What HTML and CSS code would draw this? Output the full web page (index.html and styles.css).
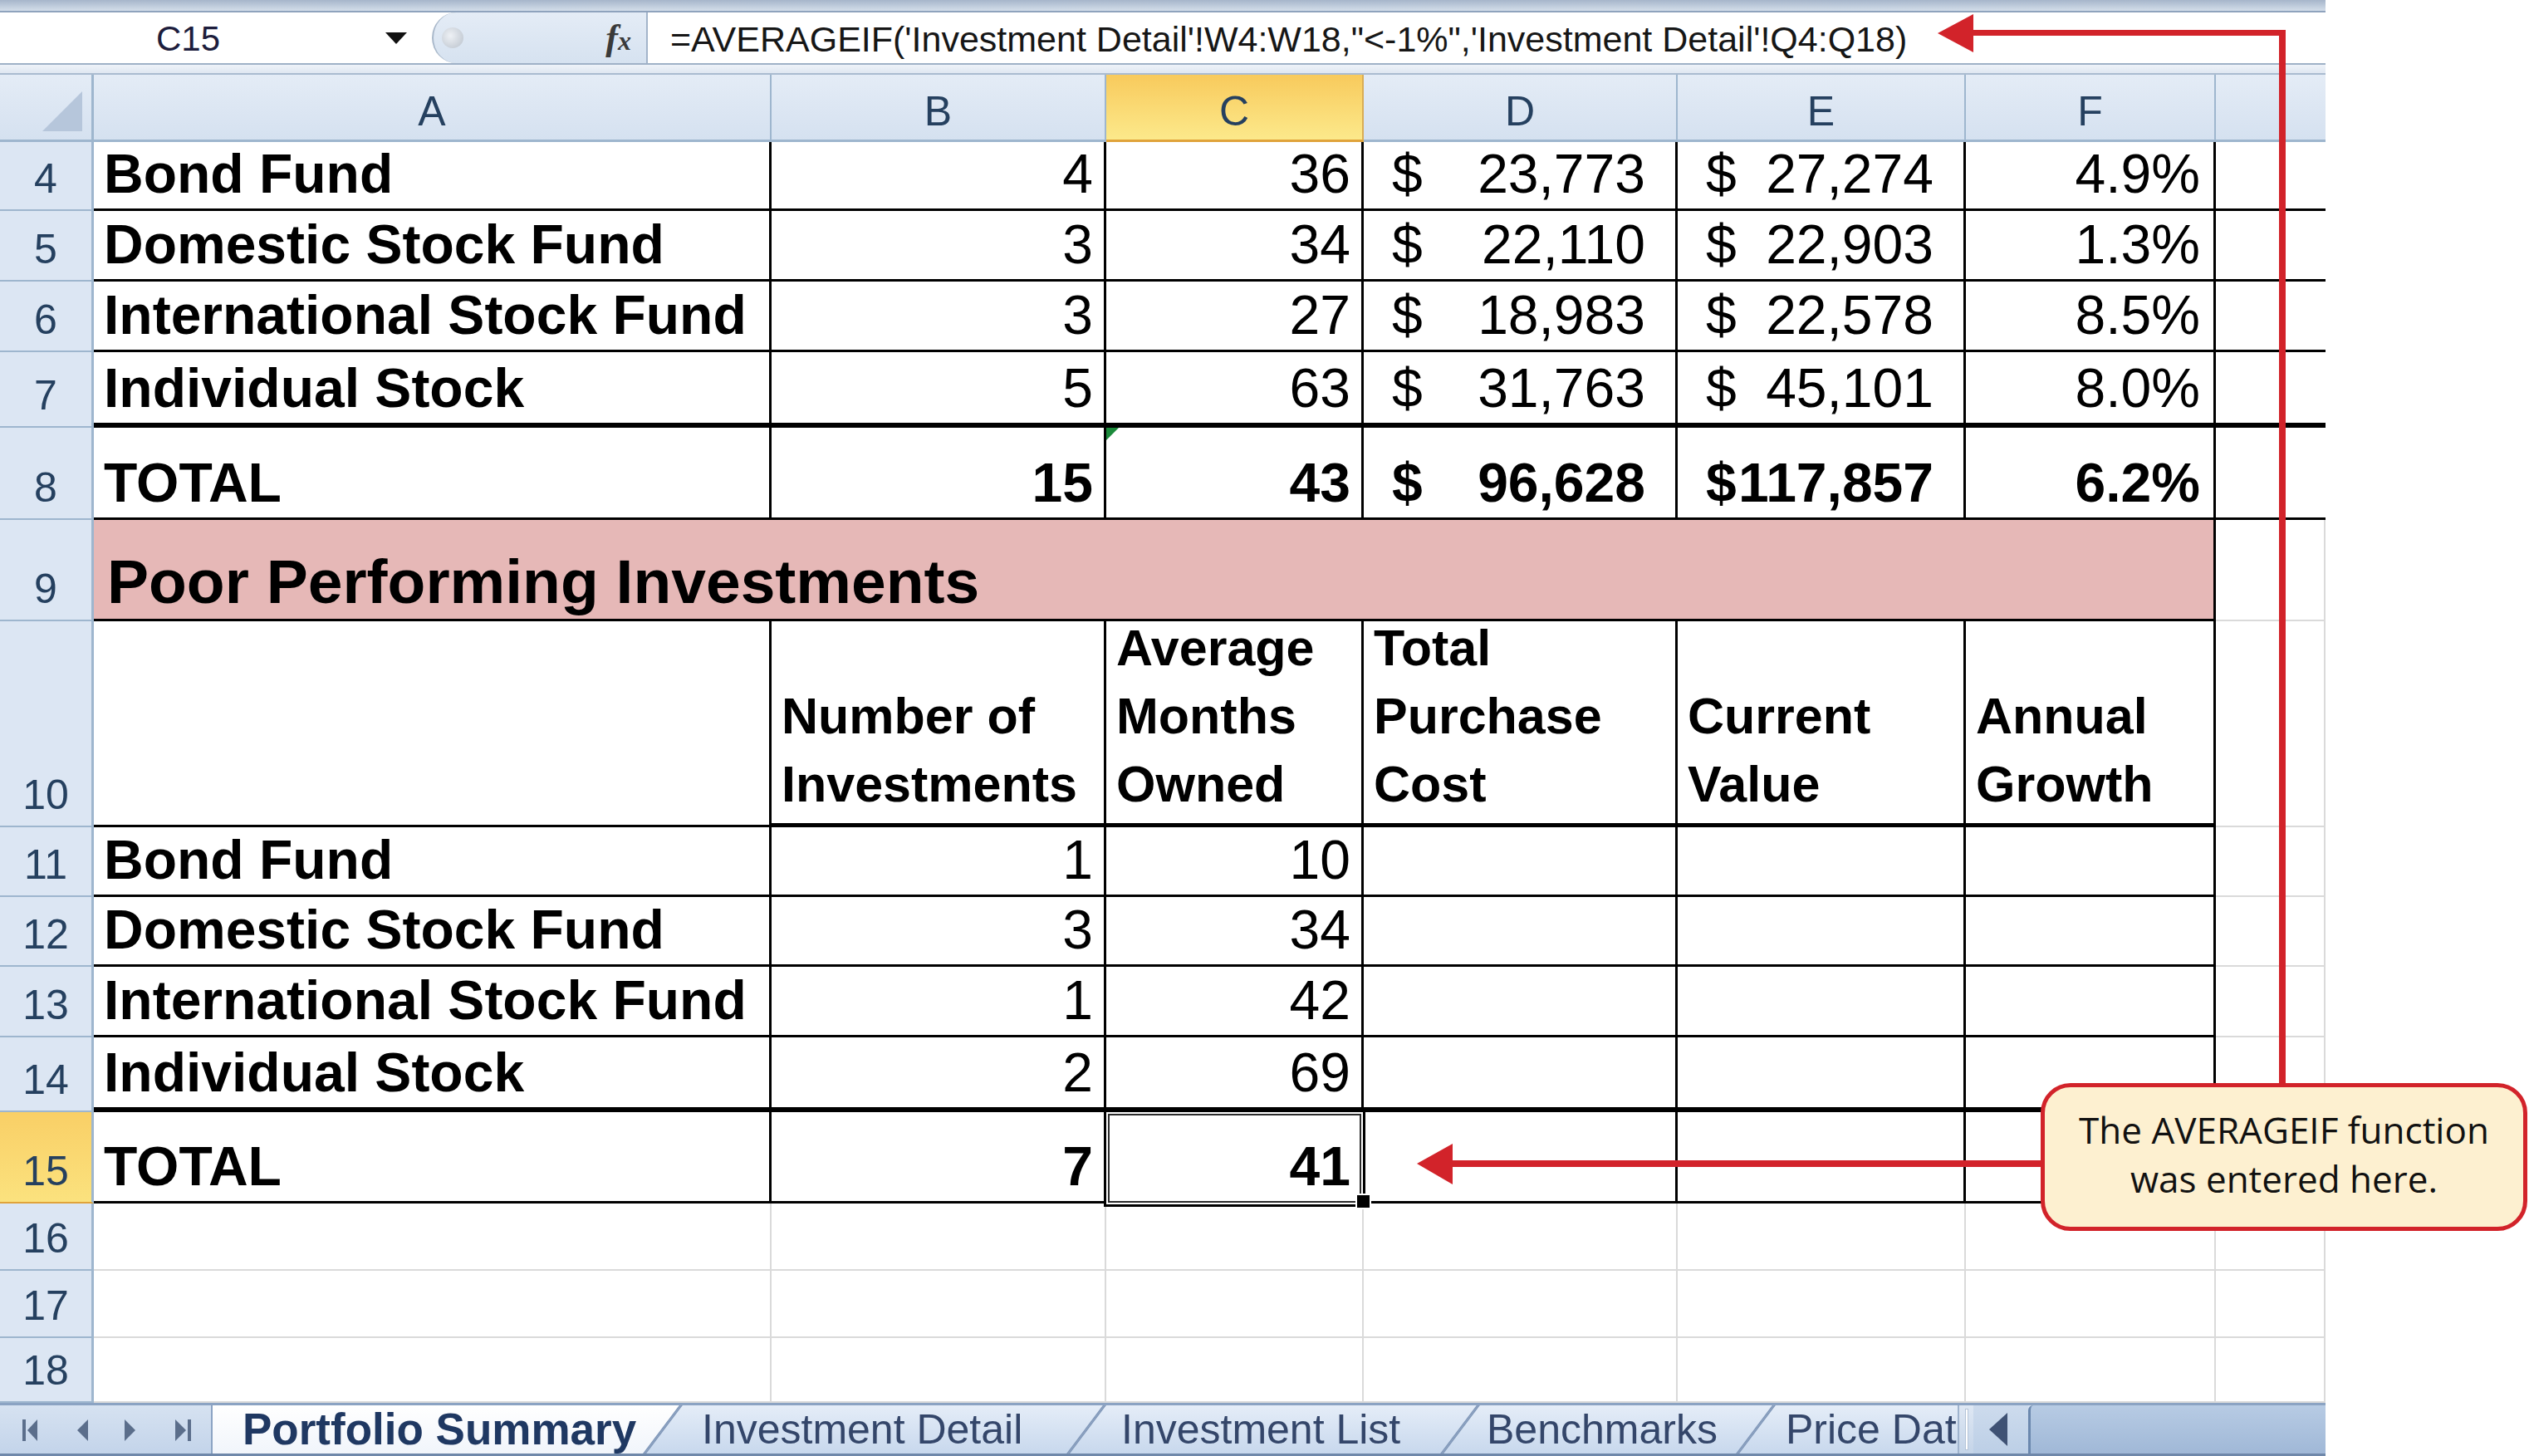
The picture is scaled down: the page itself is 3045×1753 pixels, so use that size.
FILE: index.html
```html
<!DOCTYPE html>
<html>
<head>
<meta charset="utf-8">
<link rel="stylesheet" href="styles.css">
</head>
<body>
<div class="app">
  <div class="topstrip"></div>
  <div class="fbar">
    <div class="namebox"><span class="name">C15</span><svg class="dd" width="26" height="14" viewBox="0 0 26 14"><polygon points="0,0 26,0 13,14" fill="#111"/></svg></div>
    <div class="fxpanel"><span class="grip"></span><span class="fx">f<span class="fxx">x</span></span></div>
    <div class="finput">=AVERAGEIF('Investment Detail'!W4:W18,"&lt;-1%",'Investment Detail'!Q4:Q18)</div>
  </div>
  <div class="fgap"></div>
  <div class="sheet">
    <!-- header -->
    <div class="ch corner"><svg width="48" height="48" viewBox="0 0 48 48"><polygon points="48,0 48,48 0,48" fill="#b6c6db"/></svg></div>
    <div class="ch">A</div><div class="ch">B</div><div class="ch on">C</div><div class="ch">D</div><div class="ch">E</div><div class="ch">F</div><div class="ch last"></div>
    <!-- row 4 -->
    <div class="rh">4</div>
    <div class="c b">Bond Fund</div><div class="c n">4</div><div class="c n">36</div>
    <div class="c acct"><span>$</span><span>23,773</span></div><div class="c acct"><span>$</span><span>27,274</span></div>
    <div class="c pct">4.9%</div><div class="c gx"></div>
    <!-- row 5 -->
    <div class="rh">5</div>
    <div class="c b">Domestic Stock Fund</div><div class="c n">3</div><div class="c n">34</div>
    <div class="c acct"><span>$</span><span>22,110</span></div><div class="c acct"><span>$</span><span>22,903</span></div>
    <div class="c pct">1.3%</div><div class="c gx"></div>
    <!-- row 6 -->
    <div class="rh">6</div>
    <div class="c b">International Stock Fund</div><div class="c n">3</div><div class="c n">27</div>
    <div class="c acct"><span>$</span><span>18,983</span></div><div class="c acct"><span>$</span><span>22,578</span></div>
    <div class="c pct">8.5%</div><div class="c gx"></div>
    <!-- row 7 -->
    <div class="rh">7</div>
    <div class="c b tk">Individual Stock</div><div class="c n tk">5</div><div class="c n tk">63</div>
    <div class="c acct tk"><span>$</span><span>31,763</span></div><div class="c acct tk"><span>$</span><span>45,101</span></div>
    <div class="c pct tk">8.0%</div><div class="c gx tk"></div>
    <!-- row 8 -->
    <div class="rh">8</div>
    <div class="c b">TOTAL</div><div class="c n b">15</div><div class="c n b err">43</div>
    <div class="c acct b"><span>$</span><span>96,628</span></div><div class="c acct b"><span>$</span><span>117,857</span></div>
    <div class="c pct b">6.2%</div><div class="c gx"></div>
    <!-- row 9 -->
    <div class="rh">9</div>
    <div class="c title">Poor Performing Investments</div>
    <div class="g"></div>
    <!-- row 10 -->
    <div class="rh">10</div>
    <div class="c"></div>
    <div class="c hd">Number of Investments</div>
    <div class="c hd">Average Months Owned</div>
    <div class="c hd">Total Purchase Cost</div>
    <div class="c hd">Current Value</div>
    <div class="c hd">Annual Growth</div>
    <div class="g"></div>
    <!-- row 11 -->
    <div class="rh">11</div>
    <div class="c b">Bond Fund</div><div class="c n">1</div><div class="c n">10</div>
    <div class="c"></div><div class="c"></div><div class="c"></div><div class="g"></div>
    <!-- row 12 -->
    <div class="rh">12</div>
    <div class="c b">Domestic Stock Fund</div><div class="c n">3</div><div class="c n">34</div>
    <div class="c"></div><div class="c"></div><div class="c"></div><div class="g"></div>
    <!-- row 13 -->
    <div class="rh">13</div>
    <div class="c b">International Stock Fund</div><div class="c n">1</div><div class="c n">42</div>
    <div class="c"></div><div class="c"></div><div class="c"></div><div class="g"></div>
    <!-- row 14 -->
    <div class="rh">14</div>
    <div class="c b tk">Individual Stock</div><div class="c n tk">2</div><div class="c n tk">69</div>
    <div class="c tk"></div><div class="c tk"></div><div class="c tk"></div><div class="g"></div>
    <!-- row 15 -->
    <div class="rh on">15</div>
    <div class="c b">TOTAL</div><div class="c n b">7</div><div class="c n b sel">41</div>
    <div class="c"></div><div class="c"></div><div class="c"></div><div class="g"></div>
    <!-- row 16 -->
    <div class="rh">16</div>
    <div class="g"></div><div class="g"></div><div class="g"></div><div class="g"></div><div class="g"></div><div class="g"></div><div class="g"></div>
    <!-- row 17 -->
    <div class="rh">17</div>
    <div class="g"></div><div class="g"></div><div class="g"></div><div class="g"></div><div class="g"></div><div class="g"></div><div class="g"></div>
    <!-- row 18 -->
    <div class="rh">18</div>
    <div class="g"></div><div class="g"></div><div class="g"></div><div class="g"></div><div class="g"></div><div class="g"></div><div class="g"></div>
  </div>
  <div class="tabbar">
    <div class="nav">
      <svg width="254" height="58" viewBox="0 0 254 58">
        <g fill="#5b6e8b">
          <rect x="27" y="17" width="4" height="26"/>
          <polygon points="45,17 33,30 45,43"/>
          <polygon points="106,17 93,30 106,43"/>
          <polygon points="150,17 163,30 150,43"/>
          <polygon points="211,17 224,30 211,43"/>
          <rect x="226" y="17" width="4" height="26"/>
        </g>
      </svg>
    </div>
    <div class="tabs">
      <div class="tab active">Portfolio Summary</div>
      <div class="tab t2">Investment Detail</div>
      <div class="tab t3">Investment List</div>
      <div class="tab t4">Benchmarks</div>
      <div class="tab t5">Price Data</div>
    </div>
    <div class="split"><i></i></div>
    <div class="scrbtn"><svg width="22" height="40" viewBox="0 0 22 40"><polygon points="22,0 22,40 0,20" fill="#3f5274"/></svg></div>
    <div class="track"></div>
  </div>
</div>
<svg class="annot" width="3045" height="1753" viewBox="0 0 3045 1753">
  <g fill="#d2232a" stroke="none">
    <rect x="2744" y="36" width="8" height="1272"/>
    <rect x="2372" y="36" width="380" height="7"/>
    <polygon points="2333,40 2376,17 2376,63"/>
    <rect x="1745" y="1397" width="720" height="8"/>
    <polygon points="1706,1401 1749,1377 1749,1426"/>
  </g>
</svg>
<div class="callout">The AVERAGEIF function<br>was entered here.</div>
</body>
</html>
```
FILE: styles.css
```css
* { box-sizing: border-box; margin: 0; padding: 0; }
html, body { background: #fff; }
body {
  margin: 0;
  width: 3045px;
  height: 1753px;
  overflow: hidden;
  position: relative;
  font-family: "Liberation Sans", Arial, sans-serif;
}
.app { width: 2800px; }

.topstrip { height: 13px; background: linear-gradient(#a6b5ca, #d3deea); }

.fbar {
  height: 65px;
  display: flex;
  background: #fff;
  border-top: 2px solid #8fa3bd;
  border-bottom: 2px solid #9fb1c7;
}
.namebox {
  width: 520px;
  display: flex;
  align-items: center;
  padding-left: 188px;
  font-size: 42px;
  color: #1d1d3c;
  padding-top: 2px;
}
.namebox .name { width: 276px; }
.namebox .dd { margin-top: -2px; }
.fxpanel {
  width: 258px;
  display: flex;
  align-items: center;
  background: linear-gradient(#e4ecf6, #d6e2f0);
  border-left: 2px solid #a9b8ca;
  border-radius: 30px 0 0 30px / 31px 0 0 31px;
  padding-left: 10px;
  padding-right: 18px;
}
.grip {
  width: 26px;
  height: 25px;
  border-radius: 50%;
  background: radial-gradient(circle at 40% 40%, #eef1f5, #b9c1cb);
  margin-right: auto;
}
.fx {
  font-family: "Liberation Serif", "Times New Roman", serif;
  font-style: italic;
  font-weight: bold;
  font-size: 44px;
  color: #3a3a3a;
  line-height: 1;
}
.fxx { font-size: 32px; }
.finput {
  flex: 1;
  border-left: 2px solid #a3b4ca;
  padding-left: 27px;
  padding-top: 2px;
  font-size: 43px;
  line-height: 61px;
  color: #161616;
  white-space: nowrap;
}
.fgap {
  height: 12px;
  background: linear-gradient(#eef3f9, #dfe7f1);
  border-bottom: 2px solid #aabbd0;
}

.sheet {
  display: grid;
  grid-template-columns: 113px 816px 403px 310px 378px 347px 301px 132px;
  grid-template-rows: 81px 83px 85px 85px 91px 111px 122px 248px 84px 84px 85px 90px 110px 81px 81px 78px;
}
.ch {
  background: linear-gradient(#e4ecf6, #d5e1f0);
  border-right: 2px solid #9eb6ce;
  border-bottom: 3px solid #9eb6ce;
  display: flex;
  justify-content: center;
  align-items: flex-end;
  padding-bottom: 5px;
  font-size: 50px;
  line-height: 1.15;
  color: #25405f;
}
.ch.corner { justify-content: flex-start; align-items: flex-start; padding: 20px 0 0 51px; border-right-width: 3px; }
.ch.on {
  background: linear-gradient(#f8ca5c, #fce98b);
  border-bottom-color: #e0a33a;
  border-right-color: #d9ad55;
}
.ch.last { border-right: none; }
.rh {
  background: #dce6f3;
  border-right: 3px solid #9eb6ce;
  border-bottom: 2px solid #9eb6ce;
  display: flex;
  justify-content: center;
  align-items: flex-end;
  padding-bottom: 8px;
  font-size: 50px;
  line-height: 1.15;
  color: #25405f;
}
.rh.on { background: linear-gradient(#f9cf66, #fbe27e); border-bottom-color: #e0a33a; }

.c {
  border-right: 3px solid #000;
  border-bottom: 3px solid #000;
  display: flex;
  align-items: flex-end;
  padding: 0 13px 3px 12px;
  font-size: 66px;
  line-height: 1.15;
  color: #000;
  white-space: nowrap;
  background: #fff;
}
.n { justify-content: flex-end; }
.b { font-weight: bold; }
.acct { justify-content: space-between; padding-left: 34px; padding-right: 36px; }
.pct { justify-content: flex-end; padding-right: 16px; }
.tk { border-bottom-width: 6px; }
.gx { border-right: none; }
.g { border-right: 2px solid #dadada; border-bottom: 2px solid #dadada; }
.title {
  grid-column: span 6;
  background: #e6b8b7;
  font-size: 75px;
  font-weight: bold;
  padding-left: 16px;
  padding-bottom: 2px;
}
.hd {
  white-space: normal;
  font-weight: bold;
  font-size: 61px;
  line-height: 82px;
  padding-bottom: 6px;
  border-bottom-width: 5px;
}
.err { position: relative; }
.err::before {
  content: "";
  position: absolute;
  left: 0;
  top: 0;
  border-top: 15px solid #1b8a3b;
  border-right: 15px solid transparent;
}
.sel { position: relative; z-index: 2; }
.sel::after {
  content: "";
  position: absolute;
  left: -3px;
  top: -3px;
  right: -5px;
  bottom: -7px;
  border: 3px solid #000;
  box-shadow: inset 0 0 0 2px #fff, inset 0 0 0 4px #2b2b2b;
}
.sel::before {
  content: "";
  position: absolute;
  right: -12px;
  bottom: -10px;
  width: 15px;
  height: 15px;
  background: #000;
  border: 2px solid #fff;
  z-index: 3;
}

.tabbar {
  height: 64px;
  display: flex;
  border-top: 3px solid #8ba3c3;
  border-bottom: 3px solid #6f88aa;
  background: linear-gradient(#d6e2f1, #c3d4ea);
}
.nav { width: 256px; flex: none; border-right: 2px solid #8ba3c3; }
.nav svg { display: block; }
.tabs {
  width: 2101px;
  flex: none;
  display: flex;
  overflow: hidden;
}
.tab {
  position: relative;
  flex: none;
  height: 58px;
  line-height: 58px;
  font-size: 50px;
  color: #34466a;
  z-index: 1;
  white-space: nowrap;
  overflow: visible;
}
.tab::before {
  content: "";
  position: absolute;
  top: 0;
  bottom: 0;
  left: 0;
  right: 0;
  z-index: -1;
  transform: skewX(-37deg);
  background: linear-gradient(#e5edf8, #c8d8ed);
  border-left: 2px solid #8198b9;
  border-right: 2px solid #8198b9;
}
.tab.active {
  z-index: 5;
  margin-left: -30px;
  width: 572px;
  padding-left: 66px;
  font-size: 53px;
  font-weight: bold;
  color: #1f3862;
}
.tab.active::before { background: linear-gradient(#ffffff, #f1f5fb); }
.t2 { width: 510px; padding-left: 47px; z-index: 4; }
.t3 { width: 450px; padding-left: 42px; z-index: 3; }
.t4 { width: 356px; padding-left: 32px; z-index: 2; }
.t5 { width: 300px; padding-left: 36px; z-index: 1; }
.split {
  width: 19px;
  flex: none;
  background: linear-gradient(#dfe8f4, #c4d4e8);
  border-left: 2px solid #9fb3cd;
  display: flex;
  justify-content: center;
  padding: 4px 0;
}
.split i { display: block; width: 4px; background: #fff; border: 1px solid #b4c4d8; }
.scrbtn {
  width: 66px;
  flex: none;
  display: flex;
  align-items: center;
  justify-content: center;
  background: linear-gradient(#cddbed, #bccfe6);
  padding-right: 6px;
}
.track {
  flex: 1;
  background: linear-gradient(#b7cbe4, #a0b8d7);
  border-left: 3px solid #6b88ae;
  border-radius: 6px 0 0 0;
}

.annot { position: absolute; left: 0; top: 0; pointer-events: none; }
.callout {
  position: absolute;
  left: 2457px;
  top: 1304px;
  width: 586px;
  height: 178px;
  border: 5px solid #d2232a;
  border-radius: 36px;
  background: #fdf0d0;
  font-family: "Open Sans", "Noto Sans", sans-serif;
  font-size: 44px;
  line-height: 59px;
  color: #111;
  text-align: center;
  padding-top: 22px;
}
```
